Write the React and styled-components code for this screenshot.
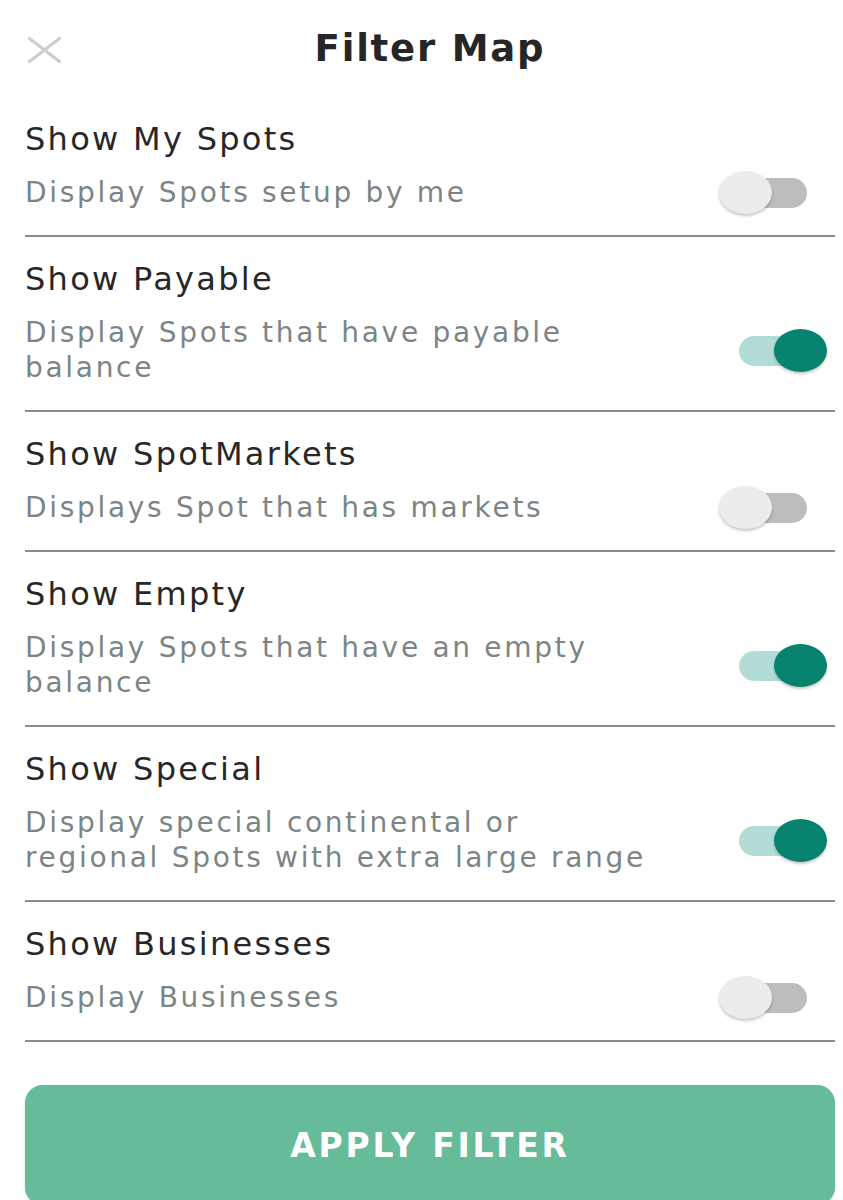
import React, { useState } from 'react';
import styled, { createGlobalStyle } from 'styled-components';

const filters = [
    { title: "Show My Spots", desc: "Display Spots setup by me", on: false },
    { title: "Show Payable", desc: "Display Spots that have payable balance", on: true },
    { title: "Show SpotMarkets", desc: "Displays Spot that has markets", on: false },
    { title: "Show Empty", desc: "Display Spots that have an empty balance", on: true },
    { title: "Show Special", desc: "Display special continental or regional Spots with extra large range", on: true },
    { title: "Show Businesses", desc: "Display Businesses", on: false },
];

const Toggle = ({ on, onClick }) => (
    <Switch onClick={onClick}>
        <Track on={on ? 1 : 0} />
        <Knob on={on ? 1 : 0} />
    </Switch>
);

const App = () => {
    const [state, setState] = useState(filters.map(f => f.on));

    const flip = (i) => setState(s => s.map((v, j) => (j === i ? !v : v)));

    return (
        <>
            <Global />
            <Page>
                <Header>
                    <Close>
                        <svg width="35" height="28" viewBox="0 0 35 28">
                            <path d="M2.5 2.5 L32.5 25.5 M32.5 2.5 L2.5 25.5" stroke="#cdcdcd" strokeWidth="3.2" strokeLinecap="round" fill="none" />
                        </svg>
                    </Close>
                    <Title>Filter Map</Title>
                    <span />
                </Header>
                {filters.map((f, i) => (
                    <Row key={f.title}>
                        <RowTitle>{f.title}</RowTitle>
                        <Desc>{f.desc}</Desc>
                        <Toggle on={state[i]} onClick={() => flip(i)} />
                    </Row>
                ))}
                <Apply>APPLY FILTER</Apply>
            </Page>
        </>
    );
};

export default App;

const Global = createGlobalStyle`
    body{
        margin:0;
        background:#fff;
        overflow:hidden;
        font-family:"DejaVu Sans", "Noto Sans", sans-serif;
    }
`

const Page = styled.div`
    width:843px;
    box-sizing:border-box;
    padding:0 8px 0 25px;
`

const Header = styled.div`
    height:97px;
    display:grid;
    grid-template-columns:1fr auto 1fr;
    align-items:center;
`

const Close = styled.div`
    display:flex;
    padding-left:2px;
    padding-top:2px;
`

const Title = styled.div`
    font-size:37px;
    font-weight:bold;
    letter-spacing:1.8px;
    color:#262626;
    line-height:44px;
    padding-top:1px;
`

const Row = styled.div`
    display:grid;
    grid-template-columns:1fr auto;
    column-gap:20px;
    row-gap:16px;
    padding:22px 0 25px;
    border-bottom:2px solid #888d8d;
`

const RowTitle = styled.div`
    grid-column:1 / 3;
    font-size:32px;
    line-height:40px;
    letter-spacing:2.3px;
    color:#272727;
`

const Desc = styled.div`
    max-width:628px;
    font-size:28px;
    line-height:35px;
    letter-spacing:2.7px;
    color:#7c8585;
`

const Switch = styled.div`
    position:relative;
    width:108px;
    height:43px;
    align-self:center;
    margin:-5px 8px -5px 0;
    cursor:pointer;
`

const Track = styled.div`
    position:absolute;
    left:20px;
    right:20px;
    top:7px;
    height:30px;
    border-radius:15px;
    background:${props => props.on ? '#b3dcd7' : '#bdbdbd'};
`

const Knob = styled.div`
    position:absolute;
    top:0;
    left:${props => props.on ? '55px' : '0'};
    width:53px;
    height:43px;
    border-radius:50%;
    background:${props => props.on ? '#07826f' : '#ececec'};
    box-shadow:0 2px 3px rgba(0,0,0,0.22);
`

const Apply = styled.button`
    display:block;
    width:100%;
    height:120px;
    margin-top:43px;
    border:none;
    border-radius:18px;
    background:#66bb98;
    color:#fff;
    font-family:"DejaVu Sans", sans-serif;
    font-size:33px;
    font-weight:bold;
    letter-spacing:2.8px;
    box-shadow:0 1px 3px rgba(0,0,0,0.15);
`
